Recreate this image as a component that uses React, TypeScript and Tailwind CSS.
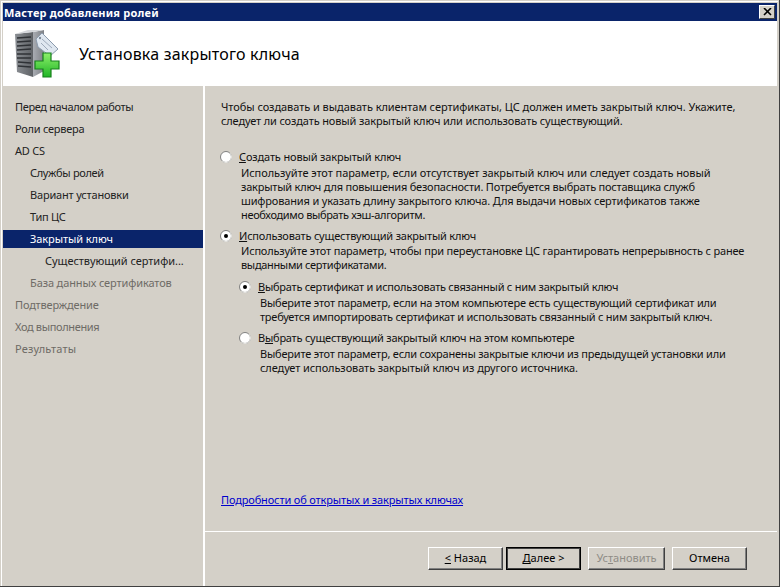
import React from "react";

const font = { fontFamily: '"Noto Sans", "DejaVu Sans", sans-serif' };

function Radio({ checked }: { checked?: boolean }) {
  return (
    <svg width="12" height="12" viewBox="0 0 12 12" className="shrink-0">
      <circle cx="6" cy="6" r="5.5" fill="#fff" stroke="#808080" />
      <path d="M2.1 9.9A5.5 5.5 0 0 0 9.9 2.1" fill="none" stroke="#ecebe6" />
      {checked && <circle cx="6" cy="6" r="2" fill="#000" />}
    </svg>
  );
}

function U({ children }: { children: React.ReactNode }) {
  return <span className="underline">{children}</span>;
}

function Btn({ children, className = "" }: { children: React.ReactNode; className?: string }) {
  return (
    <div className={`h-[23px] flex items-center justify-center border border-t-white border-l-white border-r-[#404040] border-b-[#404040] shadow-[inset_-1px_-1px_0_#808080] ${className}`}>
      {children}
    </div>
  );
}

function L({ c, children }: { c: string; children: React.ReactNode }) {
  return <span className={`block whitespace-nowrap ${c}`}>{children}</span>;
}

const steps: [string, string, string, string?][] = [
  ["Перед началом работы", "pl-3 tracking-[-0.35px]", ""],
  ["Роли сервера", "pl-3 tracking-[-0.25px]", ""],
  ["AD CS", "pl-3 tracking-[-0.2px]", ""],
  ["Службы ролей", "pl-[27px] tracking-[-0.33px]", ""],
  ["Вариант установки", "pl-[27px] tracking-[-0.18px]", ""],
  ["Тип ЦС", "pl-[27px] tracking-[-0.3px]", ""],
  ["Закрытый ключ", "pl-[27px] tracking-[-0.08px]", "sel"],
  ["Существующий сертифи...", "pl-[42px] tracking-[-0.04px]", ""],
  ["База данных сертификатов", "pl-[27px] tracking-[-0.12px]", "dim"],
  ["Подтверждение", "pl-3 tracking-[-0.15px]", "dim"],
  ["Ход выполнения", "pl-3 tracking-[-0.35px]", "dim"],
  ["Результаты", "pl-3 tracking-[0.2px]", "dim"],
];

function ServerIcon() {
  return (
    <svg width="48" height="50" viewBox="0 0 48 50" className="shrink-0">
      <defs>
        <linearGradient id="srv" x1="0" y1="0" x2="1" y2="0">
          <stop offset="0" stopColor="#8b8f94" />
          <stop offset="1" stopColor="#5f6266" />
        </linearGradient>
        <linearGradient id="side" x1="0" y1="0" x2="1" y2="0">
          <stop offset="0" stopColor="#a9acb2" />
          <stop offset="1" stopColor="#7e8186" />
        </linearGradient>
        <linearGradient id="plus" x1="0" y1="0" x2="0" y2="1">
          <stop offset="0" stopColor="#8df06a" />
          <stop offset="1" stopColor="#20b526" />
        </linearGradient>
      </defs>
      <path d="M19 3 L30 1 L30 42 L19 48 Z" fill="url(#side)" />
      <path d="M1 5 L19 3 L19 48 L3 43 Z" fill="url(#srv)" />
      <path d="M1 5 L19 3 L30 1 L14 1 Z" fill="#d5d7db" />
      <path d="M3 9 L17 8 M3 13 L17 12 M3 17 L17 16 M3 21 L17 20 M3 25 L17 25 M3 29 L17 29 M4 33 L17 34 M4 37 L17 38" stroke="#2f3236" strokeWidth="1.4" />
      <path d="M22 10 L28 4 L44 20 L36 27 L24 18 Z" fill="#dfe7f0" stroke="#8c9bad" />
      <path d="M28 10 L38 19 M27 14 L34 21" stroke="#9eaaba" />
      <circle cx="26" cy="9" r="1.2" fill="#7f8b99" />
      <path d="M29 24 H37 V32 H45 V40 H37 V48 H29 V40 H21 V32 H29 Z" fill="url(#plus)" stroke="#16801c" strokeWidth="1.2" />
    </svg>
  );
}

export default function App() {
  return (
    <div className="w-[780px] h-[587px] bg-[#d4d0c8] text-[11px] text-black overflow-hidden border-r border-b border-r-[#404040] border-b-[#404040]" style={font}>
      <div className="h-full border-t border-l border-t-white border-l-white ml-px mt-px mr-px mb-px p-px flex flex-col">
        <div className="h-[18px] bg-[#0a246a] text-white font-bold flex items-center justify-between pl-px pr-[2px] shrink-0">
          <span className="leading-none tracking-[0.2px]">Мастер добавления ролей</span>
          <div className="w-[16px] h-[14px] bg-[#d4d0c8] border border-t-white border-l-white border-r-[#404040] border-b-[#404040] flex items-center justify-center">
            <svg width="9" height="8" viewBox="0 0 9 8"><path d="M1 0 L8 7 M8 0 L1 7" stroke="#000" strokeWidth="1.6" /></svg>
          </div>
        </div>
        <div className="h-[65px] bg-white flex items-center pl-[11px] shrink-0 pt-[1px]">
          <ServerIcon />
          <h1 className="ml-[17px] text-[16px] font-normal tracking-[0.2px]">Установка закрытого ключа</h1>
        </div>
        <div className="flex flex-1 min-h-0">
          <div className="w-[200px] pt-[12px] flex flex-col gap-1 shrink-0">
            {steps.map(([t, p, s]) => (
              <div key={t} className={`h-[18px] flex items-center ${p} ${s === "sel" ? "bg-[#0a246a] text-white" : s === "dim" ? "text-[#6e6b66]" : "text-[#222]"}`}>
                {t}
              </div>
            ))}
          </div>
          <div className="flex-1 border-l-2 border-l-white flex flex-col min-w-0">
            <div className="flex-1 pl-4 pr-[16px] pt-[14px] leading-[14px] text-[#111] min-h-0">
              <div>
                <L c="tracking-[-0.055px]">Чтобы создавать и выдавать клиентам сертификаты, ЦС должен иметь закрытый ключ. Укажите,</L>
                <L c="tracking-[-0.13px]">следует ли создать новый закрытый ключ или использовать существующий.</L>
              </div>
              <div className="mt-[22px] -ml-px flex items-center gap-[7px] tracking-[-0.15px]">
                <Radio />
                <span><U>С</U>оздать новый закрытый ключ</span>
              </div>
              <div className="ml-[20px] mt-[2px]">
                <L c="tracking-[-0.07px]">Используйте этот параметр, если отсутствует закрытый ключ или следует создать новый</L>
                <L c="tracking-[-0.22px]">закрытый ключ для повышения безопасности. Потребуется выбрать поставщика служб</L>
                <L c="tracking-[-0.15px]">шифрования и указать длину закрытого ключа. Для выдачи новых сертификатов также</L>
                <L c="tracking-[-0.34px]">необходимо выбрать хэш-алгоритм.</L>
              </div>
              <div className="mt-[7px] -ml-px flex items-center gap-[7px] tracking-[-0.2px]">
                <Radio checked />
                <span><U>И</U>спользовать существующий закрытый ключ</span>
              </div>
              <div className="ml-[20px] mt-px">
                <L c="tracking-[-0.18px]">Используйте этот параметр, чтобы при переустановке ЦС гарантировать непрерывность с ранее</L>
                <L c="tracking-[-0.33px]">выданными сертификатами.</L>
              </div>
              <div className="ml-[18px] mt-[8px] flex items-center gap-[7px] tracking-[-0.25px]">
                <Radio checked />
                <span><U>В</U>ыбрать сертификат и использовать связанный с ним закрытый ключ</span>
              </div>
              <div className="ml-[39px] mt-[2px]">
                <L c="tracking-[-0.2px]">Выберите этот параметр, если на этом компьютере есть существующий сертификат или</L>
                <L c="tracking-[-0.24px]">требуется импортировать сертификат и использовать связанный с ним закрытый ключ.</L>
              </div>
              <div className="ml-[18px] mt-[7px] flex items-center gap-[7px] tracking-[-0.23px]">
                <Radio />
                <span>В<U>ы</U>брать существующий закрытый ключ на этом компьютере</span>
              </div>
              <div className="ml-[39px] mt-[2px]">
                <L c="tracking-[-0.21px]">Выберите этот параметр, если сохранены закрытые ключи из предыдущей установки или</L>
                <L c="tracking-[-0.09px]">следует использовать закрытый ключ из другого источника.</L>
              </div>
            </div>
            <div className="pl-4 h-[39px] shrink-0 text-[#0000cc] underline tracking-[-0.14px]">Подробности об открытых и закрытых ключах</div>
            <div className="h-[55px] shrink-0 border-t border-t-white flex items-start justify-end pt-[15px] pr-[30px]">
              <Btn className="w-[75px] mr-[3px]"><span><U>&lt;</U> Назад</span></Btn>
              <Btn className="w-[75px] mr-[7px] !border-black !shadow-[inset_0_0_0_1px_#404040]"><span><U>Д</U>алее &gt;</span></Btn>
              <Btn className="w-[77px] mr-[7px] text-[#8f8c86]"><span>Ус<U>т</U>ановить</span></Btn>
              <Btn className="w-[75px]"><span>Отмена</span></Btn>
            </div>
          </div>
        </div>
      </div>
    </div>
  );
}
